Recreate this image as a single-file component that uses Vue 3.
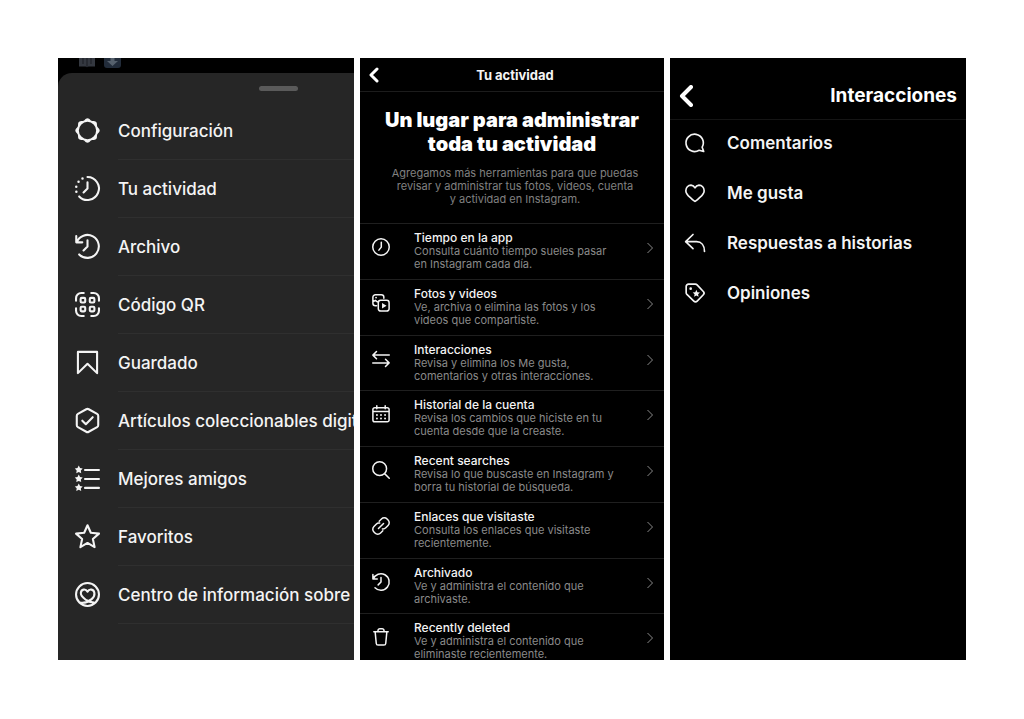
<script setup>
const ring = (points) => points.map(([x, y], i) => `${i ? 'L' : 'M'}${x.toFixed(2)} ${y.toFixed(2)}`).join('') + 'Z'

const star = (cx, cy, outer, inner) =>
  ring(Array.from({ length: 10 }, (_, i) => {
    const a = (i * Math.PI) / 5 - Math.PI / 2
    const r = i % 2 ? inner : outer
    return [cx + r * Math.cos(a), cy + r * Math.sin(a)]
  }))

const scallop = ring(Array.from({ length: 96 }, (_, i) => {
  const a = (i * Math.PI) / 48
  const r = 10.9 + 0.8 * Math.cos(8 * a)
  return [12 + r * Math.cos(a), 12 + r * Math.sin(a)]
}))

const dot = (x, y, r) => `M${x - r} ${y}a${r} ${r} 0 1 0 ${2 * r} 0a${r} ${r} 0 1 0 ${-2 * r} 0Z`
const cell = (x, y) => `M${x + 1} ${y}h2.4a1 1 0 0 1 1 1v2.4a1 1 0 0 1-1 1h-2.4a1 1 0 0 1-1-1v-2.4a1 1 0 0 1 1-1Z`

const icons = {
  settings: { line: '', fill: scallop + dot(12, 12, 8.3) },
  activity: {
    line: 'M12 1A11 11 0 1 1 4 19.6M12 6v6l-3.8 3.8',
    fill: dot(7.2, 2.4, 1.2) + dot(3.4, 5.6, 1.2) + dot(1.2, 10.2, 1.2) + dot(1.3, 15.2, 1.2)
  },
  archive: { line: 'M1.6 8A11 11 0 1 1 4 19.6M1.2 2v6h5.8M12 6v6l-3.8 3.8' },
  qr: {
    line: 'M1 8.4V6a5 5 0 0 1 5-5h2.4M15.6 1H18a5 5 0 0 1 5 5v2.4M23 15.6V18a5 5 0 0 1-5 5h-2.4M8.4 23H6a5 5 0 0 1-5-5v-2.4' +
      cell(5.4, 5.6) + cell(14.2, 5.6) + cell(5.4, 14.2) + cell(14.2, 14.2)
  },
  saved: { line: 'M2.8 1.8h18.4v20.4L12 13.2l-9.2 9Z' },
  collectible: { line: 'M10.8 1.2a2.4 2.4 0 0 1 2.4 0l8 4.4a2.2 2.2 0 0 1 1.1 2v8.8a2.2 2.2 0 0 1-1.1 2l-8 4.4a2.4 2.4 0 0 1-2.4 0l-8-4.4a2.2 2.2 0 0 1-1.1-2V7.6a2.2 2.2 0 0 1 1.1-2ZM7 12.2l3.4 3.4 6.6-6.8' },
  friends: {
    line: 'M9.6 3.8H23M9.6 12.4H23M9.6 21H23',
    fill: star(3.6, 3.6, 4, 2.1) + star(3.6, 12.2, 4, 2.1) + star(3.6, 20.8, 4, 2.1)
  },
  favorite: { line: star(12, 12.8, 11.6, 5.4) },
  support: {
    line: dot(12, 12, 11) + 'M4.6 19.6C8.4 20.4 12.4 19.4 16 16.4c2.2-1.8 3-3.8 2.6-6-.6-3.4-4.6-4.4-6.6-1.2C10 6 6 7 5.6 10.4c-.3 3 2.4 4.8 5 6.8 2.2 1.6 4.6 2.4 7.6 2.6'
  },
  clock: { line: dot(12, 12, 11) + 'M12.4 5.6v6.6l-3.2 4' },
  media: {
    line: 'M6 15.6H4.6a3.4 3.4 0 0 1-3.4-3.4V4.4A3.4 3.4 0 0 1 4.6 1h7.8a3.4 3.4 0 0 1 3.4 3.4v1.2M1.2 10.4l3.2-2 2.8 2M11.6 8.4h8a3.2 3.2 0 0 1 3.2 3.2v8a3.2 3.2 0 0 1-3.2 3.2h-8a3.2 3.2 0 0 1-3.2-3.2v-8a3.2 3.2 0 0 1 3.2-3.2Z',
    fill: 'M13.4 12v7.4l6-3.7Z' + dot(5.4, 4.8, 1.2)
  },
  exchange: { line: 'M23 6.8H1.2M6 2 1.2 6.8 6 11.6M1 17.2h21.8M18 12.4l4.8 4.8L18 22' },
  calendar: {
    line: 'M3.6 3.6h16.8a2.4 2.4 0 0 1 2.4 2.4v14a2.4 2.4 0 0 1-2.4 2.4H3.6A2.4 2.4 0 0 1 1.2 20V6a2.4 2.4 0 0 1 2.4-2.4ZM1.2 8.8h21.6M6.4 1v4M17.6 1v4',
    fill: [6.6, 12, 17.4].map((x) => dot(x, 13.2, 1.3) + dot(x, 18, 1.3)).join('')
  },
  search: { line: dot(10.2, 10.2, 9.2) + 'M16.8 16.8 23 23' },
  link: { line: 'm9.6 5.6 3-3a5.3 5.3 0 0 1 7.5 0l1.3 1.3a5.3 5.3 0 0 1 0 7.5l-3 3a5.3 5.3 0 0 1-4.6 1.5M14.4 18.4l-3 3a5.3 5.3 0 0 1-7.5 0l-1.3-1.3a5.3 5.3 0 0 1 0-7.5l3-3a5.3 5.3 0 0 1 4.6-1.5M8.6 15.4l6.8-6.8' },
  trash: { line: 'M2.4 5h19.2M8 4.8V3.4A2.4 2.4 0 0 1 10.4 1h3.2A2.4 2.4 0 0 1 16 3.4v1.4M4.2 5.2l1.5 15.4a2.4 2.4 0 0 0 2.4 2.2h7.8a2.4 2.4 0 0 0 2.4-2.2L19.8 5.2' },
  comment: { line: 'M20.6 17A10.4 10.4 0 1 0 17 20.7l5.4 1.5Z' },
  heart: { line: 'M16.8 2.6a6 6 0 0 0-4.8 3.2 6 6 0 0 0-4.8-3.2C3.8 2.6 1 5.6 1 9.2c0 4 3 6.2 5.8 8.6C9.4 20.2 11.4 22 12 22s2.6-1.8 5.2-4.2C20 15.4 23 13.2 23 9.2c0-3.6-2.8-6.6-6.2-6.6Z' },
  reply: { line: 'M9.6 1.8.8 10.4l8.8 8.4M.8 10.4H14c5.4 0 9.4 4.2 9.4 11.8' },
  tag: {
    line: 'M1.4 4.2a2.8 2.8 0 0 1 2.8-2.8h8.2a3 3 0 0 1 2.1.9l7.5 7.9a2.8 2.8 0 0 1 0 3.9l-7.4 7.7a2.8 2.8 0 0 1-4 0l-8.3-8.1a3 3 0 0 1-.9-2.1Z',
    fill: dot(6.8, 6.8, 1.6) + star(13.6, 12.8, 4.6, 2.2)
  }
}

const menu = [
  { icon: 'settings', label: 'Configuración' },
  { icon: 'activity', label: 'Tu actividad' },
  { icon: 'archive', label: 'Archivo' },
  { icon: 'qr', label: 'Código QR' },
  { icon: 'saved', label: 'Guardado' },
  { icon: 'collectible', label: 'Artículos coleccionables digit' },
  { icon: 'friends', label: 'Mejores amigos' },
  { icon: 'favorite', label: 'Favoritos' },
  { icon: 'support', label: 'Centro de información sobre' }
]

const tools = [
  { icon: 'clock', title: 'Tiempo en la app', lines: ['Consulta cuánto tiempo sueles pasar', 'en Instagram cada día.'] },
  { icon: 'media', title: 'Fotos y videos', lines: ['Ve, archiva o elimina las fotos y los', 'videos que compartiste.'] },
  { icon: 'exchange', title: 'Interacciones', lines: ['Revisa y elimina los Me gusta,', 'comentarios y otras interacciones.'] },
  { icon: 'calendar', title: 'Historial de la cuenta', lines: ['Revisa los cambios que hiciste en tu', 'cuenta desde que la creaste.'] },
  { icon: 'search', title: 'Recent searches', lines: ['Revisa lo que buscaste en Instagram y', 'borra tu historial de búsqueda.'] },
  { icon: 'link', title: 'Enlaces que visitaste', lines: ['Consulta los enlaces que visitaste', 'recientemente.'] },
  { icon: 'archive', title: 'Archivado', lines: ['Ve y administra el contenido que', 'archivaste.'] },
  { icon: 'trash', title: 'Recently deleted', lines: ['Ve y administra el contenido que', 'eliminaste recientemente.'] }
]

const interactions = [
  { icon: 'comment', label: 'Comentarios' },
  { icon: 'heart', label: 'Me gusta' },
  { icon: 'reply', label: 'Respuestas a historias' },
  { icon: 'tag', label: 'Opiniones' }
]
</script>

<template>
  <main class="board">
    <section class="panel">
      <div class="feed-strip">
        <svg class="feed-icons" viewBox="0 0 44 10" aria-hidden="true">
          <path d="M1 0h16v8.5h-6.5l-1.5.8-1.5-.8H1Z" fill="#343840" />
          <path d="M9 0v9M5 0v6M13 0v6" stroke="#1b1d22" stroke-width="1" />
          <path d="M26 0h17v7a3 3 0 0 1-3 3H29a3 3 0 0 1-3-3Z" fill="#222c3a" />
          <path d="M32.5 0h4v3H40l-5.5 5L29 3h3.5Z" fill="#56616d" />
        </svg>
      </div>
      <div class="sheet">
        <div class="handle"></div>
        <ul class="menu">
          <li v-for="item in menu" :key="item.label">
            <button type="button" class="menu-row">
              <svg class="icon icon-large" viewBox="0 0 24 24" aria-hidden="true">
                <path v-if="icons[item.icon].line" class="line" :d="icons[item.icon].line" />
                <path v-if="icons[item.icon].fill" class="solid" :d="icons[item.icon].fill" />
              </svg>
              <span class="menu-label">{{ item.label }}</span>
            </button>
          </li>
        </ul>
      </div>
    </section>

    <section class="panel">
      <header class="bar">
        <button type="button" class="back" aria-label="Atrás">
          <svg class="back-small" viewBox="0 0 10 16" aria-hidden="true"><path d="M8 2 2 8l6 6" /></svg>
        </button>
        <h2 class="bar-title">Tu actividad</h2>
      </header>
      <div class="intro">
        <h1 class="headline">Un lugar para administrar<br />toda tu actividad</h1>
        <p class="summary">Agregamos más herramientas para que puedas<br />revisar y administrar tus fotos, videos, cuenta<br />y actividad en Instagram.</p>
      </div>
      <ul class="tools">
        <li v-for="tool in tools" :key="tool.title" class="tool">
          <button type="button" class="tool-row">
            <svg class="icon icon-small" viewBox="0 0 24 24" aria-hidden="true">
              <path v-if="icons[tool.icon].line" class="line" :d="icons[tool.icon].line" />
              <path v-if="icons[tool.icon].fill" class="solid" :d="icons[tool.icon].fill" />
            </svg>
            <span class="tool-text">
              <span class="tool-title">{{ tool.title }}</span>
              <span v-for="line in tool.lines" :key="line" class="tool-line">{{ line }}</span>
            </span>
            <svg class="chevron" viewBox="0 0 8 12" aria-hidden="true"><path d="m1.5 1 5 5-5 5" /></svg>
          </button>
        </li>
      </ul>
    </section>

    <section class="panel">
      <header class="wide-bar">
        <button type="button" class="back" aria-label="Atrás">
          <svg class="back-large" viewBox="0 0 14 22" aria-hidden="true"><path d="M12 2 3 11l9 9" /></svg>
        </button>
        <h2 class="wide-title">Interacciones</h2>
      </header>
      <ul class="interactions">
        <li v-for="item in interactions" :key="item.label">
          <button type="button" class="interaction-row">
            <svg class="icon icon-medium" viewBox="0 0 24 24" aria-hidden="true">
              <path v-if="icons[item.icon].line" class="line" :d="icons[item.icon].line" />
              <path v-if="icons[item.icon].fill" class="solid" :d="icons[item.icon].fill" />
            </svg>
            <span>{{ item.label }}</span>
          </button>
        </li>
      </ul>
    </section>
  </main>
</template>

<style>
body {
  background: #fff;
}
</style>

<style scoped>
.board {
  display: grid;
  grid-template-columns: 296fr 304fr 296fr;
  gap: 6px;
  padding: 58px;
  font-family: Inter, "Liberation Sans", sans-serif;
  color: #f4f4f4;
}

.panel {
  display: flex;
  flex-direction: column;
  min-width: 0;
  overflow: hidden;
  background: #000;
}

ul {
  margin: 0;
  padding: 0;
  list-style: none;
}

h1,
h2,
p {
  margin: 0;
}

button {
  display: flex;
  padding: 0;
  border: 0;
  background: none;
  color: inherit;
  font: inherit;
  text-align: left;
  cursor: pointer;
}

svg {
  display: block;
  flex: none;
}

.icon {
  overflow: visible;
}

.line {
  fill: none;
  stroke: currentColor;
  stroke-width: 2;
  stroke-linecap: round;
  stroke-linejoin: round;
}

.solid {
  fill: currentColor;
  fill-rule: evenodd;
}

.icon-large {
  width: 25px;
  height: 25px;
}

.icon-medium {
  width: 20px;
  height: 20px;
}

.icon-small {
  width: 18px;
  height: 18px;
}

.feed-strip {
  height: 15px;
  padding-left: 20px;
}

.feed-icons {
  width: 44px;
  height: 10px;
}

.sheet {
  flex: 1;
  width: 440px;
  padding: 13px 0 36px;
  box-sizing: border-box;
  border-radius: 14px 14px 0 0;
  background: #262626;
}

.handle {
  width: 39px;
  height: 5px;
  margin: 0 auto 11px;
  border-radius: 3px;
  background: #5a5a5a;
}

.menu-row {
  width: 100%;
  height: 58px;
  align-items: center;
  gap: 18px;
  padding-left: 17px;
  font-size: 17px;
  font-weight: 500;
  white-space: nowrap;
}

.menu-row .icon {
  margin-bottom: 2px;
}

.menu-label {
  flex: 1;
  padding-top: 2px;
  line-height: 55px;
  border-bottom: 1px solid #2f2f2f;
}

.bar {
  display: grid;
  grid-template-columns: 30px 1fr 24px;
  align-items: center;
  height: 33px;
  border-bottom: 1px solid #1c1c1c;
}

.back {
  padding-left: 9px;
  color: #fff;
}

.back path {
  fill: none;
  stroke: currentColor;
  stroke-linecap: round;
  stroke-linejoin: round;
}

.back-small {
  width: 10px;
  height: 16px;
  stroke-width: 3;
}

.back-large {
  width: 14px;
  height: 22px;
  stroke-width: 4;
}

.bar-title {
  font-size: 13px;
  line-height: 16px;
  font-weight: 700;
  text-align: center;
}

.intro {
  padding: 16px 0 17px;
  text-align: center;
  white-space: nowrap;
}

.headline {
  color: #fff;
  font-size: 20px;
  line-height: 24px;
  font-weight: 900;
}

.summary {
  margin-top: 11px;
  padding-left: 6px;
  color: #808080;
  font-size: 11px;
  line-height: 13px;
  font-weight: 400;
}

.tools {
  display: grid;
  flex: 1;
  grid-auto-rows: 1fr;
  margin-bottom: -9px;
}

.tool {
  border-top: 1px solid #1f1f1f;
}

.tool-row {
  width: 100%;
  align-items: flex-start;
  gap: 24px;
  padding: 7px 10px 7px 12px;
}

.tool-row .icon {
  margin-top: 7px;
}

.tool-text {
  display: flex;
  flex: 1;
  flex-direction: column;
  min-width: 0;
  white-space: nowrap;
}

.tool-title {
  font-size: 12px;
  line-height: 14px;
  font-weight: 500;
}

.tool-line {
  color: #8a8a8a;
  font-size: 11px;
  line-height: 13px;
  font-weight: 400;
}

.chevron {
  width: 8px;
  height: 12px;
  margin-top: 11px;
  fill: none;
  stroke: #8a8a8a;
  stroke-width: 1;
}

.wide-bar {
  display: flex;
  align-items: center;
  justify-content: space-between;
  height: 47px;
  padding: 14px 9px 0 0;
  border-bottom: 1px solid #151515;
}

.wide-title {
  color: #fff;
  font-size: 19px;
  line-height: 24px;
  font-weight: 700;
}

.interactions {
  margin-top: -2px;
}

.interaction-row {
  width: 100%;
  height: 50px;
  align-items: center;
  gap: 22px;
  padding-left: 15px;
  font-size: 17px;
  font-weight: 600;
}
</style>
